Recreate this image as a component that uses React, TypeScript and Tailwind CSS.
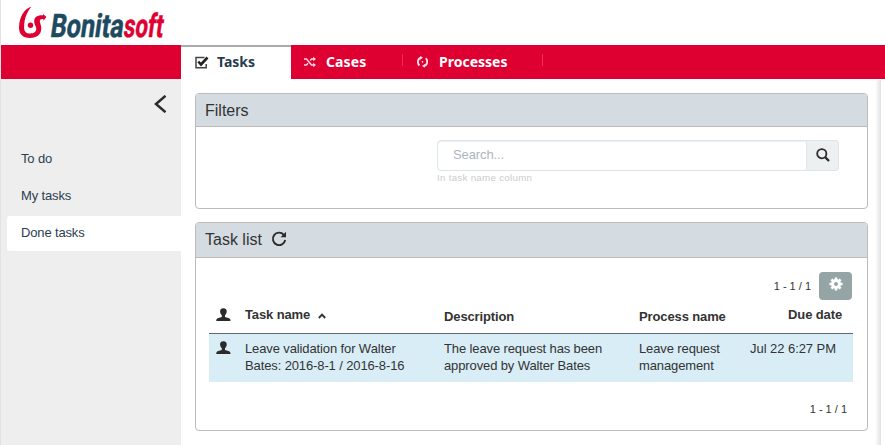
import React from "react";

function UserIcon() {
  return (
    <svg width="15" height="14" viewBox="0 0 15 14" fill="#2b2b2b" className="block">
      <path d="M7.400 .3C4.900 .3 4 1.700 4.100 3.600c.1 1.600.8 3 1.700 3.700v1.700L1.600 10.300C.6 10.800.3 11.500.3 13h14.200c0-1.500-.3-2.200-1.400-2.700L9 9V7.300c.9-.7 1.600-2.100 1.700-3.700.1-1.900-.8-3.300-3.300-3.300z" />
    </svg>
  );
}

function Logo() {
  return (
    <svg width="150" height="44" viewBox="0 0 150 44" className="block overflow-visible">
      <path d="M15.500 6.800C8 8.500 3.200 17.500 3 27.500 2.900 34 7 38 14 38c6.800 0 11.300-3.800 11.300-9.500 0-3.300-1.500-5.200-1.500-7.400 0-1.400 1-2.100 2.900-2.100h.7v1.800l3.100-3.700-3.500-3.200v1.500c-6-.3-8.800 2-8.800 6.100 0 3.300 2.100 4.900 2.100 7.300 0 2.900-2.300 4.700-6 4.700-4.400 0-6.300-2.200-6.200-6.600.2-8.100 2.500-14.600 7.400-20.100z" fill="#df0032" />
      <circle cx="14.500" cy="25.200" r="2.700" fill="#df0032" />
      <g transform="translate(33.500 36.500) skewX(-8) scale(.73 1)" fontFamily="Roboto, sans-serif" fontWeight="700" fontSize="32.500" strokeWidth=".5">
        <text textLength="100" lengthAdjust="spacingAndGlyphs" fill="#1d4961" stroke="#1d4961">
          Bonita
        </text>
        <text x="100.500" textLength="54" lengthAdjust="spacingAndGlyphs" fill="#df0032" stroke="#df0032">
          soft
        </text>
      </g>
    </svg>
  );
}

function PanelHeading({ children, className }: { children: React.ReactNode; className: string }) {
  return (
    <div className={`flex items-center rounded-t-[3px] border-b border-[#bbb] bg-[#d4dce2] pl-[9px] text-base text-[#333] ${className}`}>
      {children}
    </div>
  );
}

export default function App() {
  return (
    <div className="flex h-[445px] w-[885px] flex-col overflow-hidden border-l border-[#e3e3e3] bg-white font-['Liberation_Sans',Arial,sans-serif] text-[13px] leading-[17px] text-[#333]">
      <header className="h-[45px] shrink-0 pl-[15px]">
        <Logo />
      </header>

      <nav className="flex h-[34px] shrink-0 bg-[#df0032] font-['Noto_Sans',sans-serif] text-[14px] font-bold text-white">
        <div className="ml-[180px] flex w-[110px] items-center border-t-2 border-[#aaa] bg-white pb-[2px] pl-[14px] text-[#263c50]">
          <svg width="14" height="13" viewBox="0 0 14 13" fill="none" className="mt-px">
            <path d="M9.500 1.500H1v10.300h10.200V8" stroke="#444" strokeWidth="1.500" />
            <path d="M3.300 5.500l2.700 3L12.500 1.500" stroke="#222" strokeWidth="2.600" />
          </svg>
          <span className="mb-px ml-[8px] w-[39px]">Tasks</span>
        </div>
        <div className="flex w-[111px] items-center pl-[12px]">
          <svg width="14" height="12" viewBox="0 0 14 12" fill="none" stroke="#ffd5df" strokeWidth="1.500">
            <path d="M1 3h2.500l5 6H11M1 9h2.500L5 7.200M7.300 4.500L8.500 3H11" />
            <path d="M10.200.8v4.400L13 3zM10.200 6.800v4.400L13 9z" fill="#ffd5df" stroke="none" />
          </svg>
          <span className="mb-[2px] ml-[9px] tracking-[0.1px]">Cases</span>
        </div>
        <div className="mt-[9px] h-[12px] w-px bg-[#f02c58]" />
        <div className="flex w-[139px] items-center pl-[14px]">
          <svg width="11" height="12" viewBox="0 0 11 12" fill="none" stroke="#ffe0e8" strokeWidth="1.900">
            <path d="M4.200 1.700C.3 2.200.2 7.600 2.400 9.500M6.800 10c4-.5 4.200-6 1.900-7.800" />
            <path d="M3.200 0v3.800L6 1.500zM7.800 8v3.800L5 10z" fill="#ffe0e8" stroke="none" />
            <circle cx="5.500" cy="5.900" r=".8" fill="#ffe0e8" stroke="none" />
          </svg>
          <span className="mb-[2px] ml-[11px]">Processes</span>
        </div>
        <div className="mt-[9px] h-[12px] w-px bg-[#f02c58]" />
      </nav>

      <div className="flex min-h-0 flex-1">
        <aside className="w-[180px] shrink-0 bg-[#eee] tracking-[-0.15px] text-[#2c3e50]">
          <div className="flex h-[62px] justify-end pt-[16px] pr-[14px]">
            <svg width="13" height="18" viewBox="0 0 13 18" fill="none" stroke="#2b2b2b" strokeWidth="2.500">
              <path d="M11.500 .8L2 9l9.500 8.200" />
            </svg>
          </div>
          <div className="ml-[6px] h-[37px] pt-[9px] pl-[14px]">To do</div>
          <div className="ml-[6px] h-[37px] pt-[9px] pl-[14px]">My tasks</div>
          <div className="mt-px ml-[6px] h-[35px] rounded-l-[3px] bg-white pt-[8px] pl-[14px]">Done tasks</div>
        </aside>

        <main className="w-[695px] shrink-0 pt-[14px] pl-[14px]">
          <section className="h-[116px] w-[673px] rounded-[4px] border border-[#bbb]">
            <PanelHeading className="h-[33px] pt-[2px]">Filters</PanelHeading>
            <div className="mt-[13px] ml-[241px] w-[402px]">
              <div className="flex h-[31px]">
                <input
                  placeholder="Search..."
                  className="h-[31px] w-[370px] rounded-l-[4px] border border-[#dce4ec] px-[15px] pb-[2px] text-[13px] tracking-[-0.1px] shadow-[inset_0_1px_1px_rgba(0,0,0,.07)] placeholder:text-[#acb6c0]"
                />
                <div className="flex w-[32px] items-center justify-center rounded-r-[4px] border border-l-0 border-[#dce4ec] bg-[#ecf0f1]">
                  <svg width="14" height="14" viewBox="0 0 14 14" fill="none" stroke="#2b2b2b" className="mb-[2px]">
                    <circle cx="5.800" cy="5.700" r="4.600" strokeWidth="1.800" />
                    <path d="M9 9l4 4" strokeWidth="2.400" />
                  </svg>
                </div>
              </div>
              <div className="text-[9.75px] leading-[13px] tracking-[0.28px] text-[#ccc]">In task name column</div>
            </div>
          </section>

          <section className="mt-[13px] h-[209px] w-[673px] rounded-[4px] border border-[#bbb]">
            <PanelHeading className="h-[35px]">
              Task list
              <svg width="16" height="16" viewBox="0 0 16 16" fill="none" stroke="#2b2b2b" strokeWidth="1.900" className="mb-[2px] ml-[9px]">
                <path d="M12.800 3.800A6.200 6.200 0 1 0 14.200 9" />
                <path d="M15 .8v5.500H9.500z" fill="#2b2b2b" stroke="none" />
              </svg>
            </PanelHeading>

            <div className="mt-[14px] flex h-[28px] justify-end pr-[15px]">
              <span className="mt-[6px] mr-[8px] text-[11px]">1 - 1 / 1</span>
              <button className="flex h-[28px] w-[33px] justify-center rounded-[4px] bg-[#95a5a6] pt-[5px]">
                <svg width="14" height="14" viewBox="0 0 14 14" className="block">
                  <g fill="#fff">
                    <path d="M5.700.5h2.600v13H5.700z" />
                    <path d="M.5 5.700h13v2.600H.5z" />
                    <path d="M1.500 3.300l1.800-1.800 9.200 9.200-1.800 1.800z" />
                    <path d="M10.700 1.500l1.800 1.800-9.200 9.200-1.800-1.800z" />
                    <circle cx="7" cy="7" r="4.900" />
                  </g>
                  <circle cx="7" cy="7" r="2" fill="#95a5a6" />
                </svg>
              </button>
            </div>

            <div className="ml-[13px] w-[644px]">
              <div className="grid h-[34px] grid-cols-[36px_199px_195px_111px_103px] border-b border-[#666672] font-bold tracking-[-0.12px]">
                <div className="pt-[8px] pl-[7px]"><UserIcon /></div>
                <div className="flex pt-[6px]">
                  Task name
                  <svg width="8" height="6" viewBox="0 0 8 6" fill="none" stroke="#333" strokeWidth="1.900" className="mt-[7px] ml-[8px]">
                    <path d="M.8 5L4 1.700 7.200 5" />
                  </svg>
                </div>
                <div className="pt-[8px]">Description</div>
                <div className="pt-[8px]">Process name</div>
                <div className="pt-[6px] pr-[11px] text-right">Due date</div>
              </div>
              <div className="grid h-[48px] grid-cols-[36px_199px_195px_111px_103px] bg-[#d9edf7] pt-[6px] tracking-[-0.12px]">
                <div className="pt-px pl-[7px]"><UserIcon /></div>
                <div>Leave validation for <span className="tracking-normal">Walter</span><br />Bates: 2016-8-1 / 2016-8-16</div>
                <div>The leave request has been<br />approved by Walter Bates</div>
                <div>Leave request<br />management</div>
                <div className="whitespace-nowrap tracking-[-0.05px]">Jul 22 6:27 PM</div>
              </div>
            </div>
            <div className="mt-[19px] pr-[20px] text-right text-[11px]">1 - 1 / 1</div>
          </section>
        </main>
        <div className="mt-px -ml-px h-full w-[6px] bg-linear-to-r from-white to-[#e2e2e2]" />
      </div>
    </div>
  );
}
